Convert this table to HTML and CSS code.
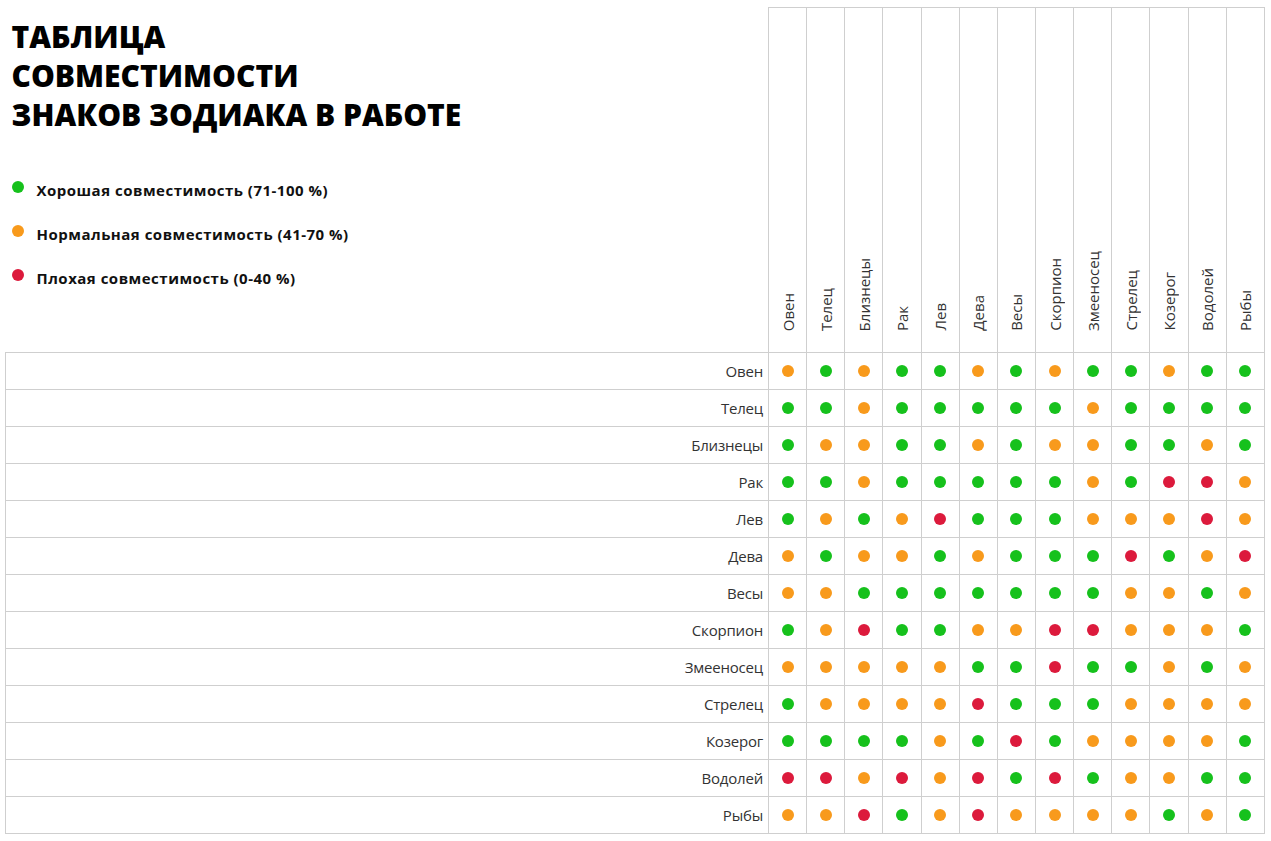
FILE: index.html
```html
<!DOCTYPE html>
<html lang="ru">
<head>
<meta charset="utf-8">
<title>Таблица совместимости знаков зодиака в работе</title>
<link rel="stylesheet" href="styles.css">
</head>
<body>
<table class="chart">
  <colgroup>
    <col class="col-label">
    <col span="13">
  </colgroup>
  <thead>
    <tr class="head-row">
      <th class="intro">
        <h1 class="title">ТАБЛИЦА<br>СОВМЕСТИМОСТИ<br>ЗНАКОВ ЗОДИАКА В РАБОТЕ</h1>
        <ul class="legend">
          <li><i class="dot g"></i>Хорошая совместимость (71-100 %)</li>
          <li><i class="dot o"></i>Нормальная совместимость (41-70 %)</li>
          <li><i class="dot r"></i>Плохая совместимость (0-40 %)</li>
        </ul>
      </th>
      <th class="sign"><span>Овен</span></th>
      <th class="sign"><span>Телец</span></th>
      <th class="sign"><span>Близнецы</span></th>
      <th class="sign"><span>Рак</span></th>
      <th class="sign"><span>Лев</span></th>
      <th class="sign"><span>Дева</span></th>
      <th class="sign"><span>Весы</span></th>
      <th class="sign"><span>Скорпион</span></th>
      <th class="sign"><span>Змееносец</span></th>
      <th class="sign"><span>Стрелец</span></th>
      <th class="sign"><span>Козерог</span></th>
      <th class="sign"><span>Водолей</span></th>
      <th class="sign"><span>Рыбы</span></th>
    </tr>
  </thead>
  <tbody>
    <tr><th class="name">Овен</th><td><i class="dot o"></i></td><td><i class="dot g"></i></td><td><i class="dot o"></i></td><td><i class="dot g"></i></td><td><i class="dot g"></i></td><td><i class="dot o"></i></td><td><i class="dot g"></i></td><td><i class="dot o"></i></td><td><i class="dot g"></i></td><td><i class="dot g"></i></td><td><i class="dot o"></i></td><td><i class="dot g"></i></td><td><i class="dot g"></i></td></tr>
    <tr><th class="name">Телец</th><td><i class="dot g"></i></td><td><i class="dot g"></i></td><td><i class="dot o"></i></td><td><i class="dot g"></i></td><td><i class="dot g"></i></td><td><i class="dot g"></i></td><td><i class="dot g"></i></td><td><i class="dot g"></i></td><td><i class="dot o"></i></td><td><i class="dot g"></i></td><td><i class="dot g"></i></td><td><i class="dot g"></i></td><td><i class="dot g"></i></td></tr>
    <tr><th class="name">Близнецы</th><td><i class="dot g"></i></td><td><i class="dot o"></i></td><td><i class="dot o"></i></td><td><i class="dot g"></i></td><td><i class="dot g"></i></td><td><i class="dot o"></i></td><td><i class="dot g"></i></td><td><i class="dot o"></i></td><td><i class="dot o"></i></td><td><i class="dot g"></i></td><td><i class="dot g"></i></td><td><i class="dot o"></i></td><td><i class="dot g"></i></td></tr>
    <tr><th class="name">Рак</th><td><i class="dot g"></i></td><td><i class="dot g"></i></td><td><i class="dot o"></i></td><td><i class="dot g"></i></td><td><i class="dot g"></i></td><td><i class="dot g"></i></td><td><i class="dot g"></i></td><td><i class="dot g"></i></td><td><i class="dot o"></i></td><td><i class="dot g"></i></td><td><i class="dot r"></i></td><td><i class="dot r"></i></td><td><i class="dot o"></i></td></tr>
    <tr><th class="name">Лев</th><td><i class="dot g"></i></td><td><i class="dot o"></i></td><td><i class="dot g"></i></td><td><i class="dot o"></i></td><td><i class="dot r"></i></td><td><i class="dot g"></i></td><td><i class="dot g"></i></td><td><i class="dot g"></i></td><td><i class="dot o"></i></td><td><i class="dot o"></i></td><td><i class="dot o"></i></td><td><i class="dot r"></i></td><td><i class="dot o"></i></td></tr>
    <tr><th class="name">Дева</th><td><i class="dot o"></i></td><td><i class="dot g"></i></td><td><i class="dot o"></i></td><td><i class="dot o"></i></td><td><i class="dot g"></i></td><td><i class="dot o"></i></td><td><i class="dot g"></i></td><td><i class="dot g"></i></td><td><i class="dot g"></i></td><td><i class="dot r"></i></td><td><i class="dot g"></i></td><td><i class="dot o"></i></td><td><i class="dot r"></i></td></tr>
    <tr><th class="name">Весы</th><td><i class="dot o"></i></td><td><i class="dot o"></i></td><td><i class="dot g"></i></td><td><i class="dot g"></i></td><td><i class="dot g"></i></td><td><i class="dot g"></i></td><td><i class="dot g"></i></td><td><i class="dot g"></i></td><td><i class="dot g"></i></td><td><i class="dot o"></i></td><td><i class="dot o"></i></td><td><i class="dot g"></i></td><td><i class="dot o"></i></td></tr>
    <tr><th class="name">Скорпион</th><td><i class="dot g"></i></td><td><i class="dot o"></i></td><td><i class="dot r"></i></td><td><i class="dot g"></i></td><td><i class="dot g"></i></td><td><i class="dot o"></i></td><td><i class="dot o"></i></td><td><i class="dot r"></i></td><td><i class="dot r"></i></td><td><i class="dot o"></i></td><td><i class="dot o"></i></td><td><i class="dot o"></i></td><td><i class="dot g"></i></td></tr>
    <tr><th class="name">Змееносец</th><td><i class="dot o"></i></td><td><i class="dot o"></i></td><td><i class="dot o"></i></td><td><i class="dot o"></i></td><td><i class="dot o"></i></td><td><i class="dot g"></i></td><td><i class="dot g"></i></td><td><i class="dot r"></i></td><td><i class="dot g"></i></td><td><i class="dot g"></i></td><td><i class="dot o"></i></td><td><i class="dot g"></i></td><td><i class="dot o"></i></td></tr>
    <tr><th class="name">Стрелец</th><td><i class="dot g"></i></td><td><i class="dot o"></i></td><td><i class="dot o"></i></td><td><i class="dot o"></i></td><td><i class="dot o"></i></td><td><i class="dot r"></i></td><td><i class="dot g"></i></td><td><i class="dot g"></i></td><td><i class="dot g"></i></td><td><i class="dot o"></i></td><td><i class="dot o"></i></td><td><i class="dot o"></i></td><td><i class="dot o"></i></td></tr>
    <tr><th class="name">Козерог</th><td><i class="dot g"></i></td><td><i class="dot g"></i></td><td><i class="dot g"></i></td><td><i class="dot g"></i></td><td><i class="dot o"></i></td><td><i class="dot g"></i></td><td><i class="dot r"></i></td><td><i class="dot g"></i></td><td><i class="dot o"></i></td><td><i class="dot o"></i></td><td><i class="dot o"></i></td><td><i class="dot o"></i></td><td><i class="dot g"></i></td></tr>
    <tr><th class="name">Водолей</th><td><i class="dot r"></i></td><td><i class="dot r"></i></td><td><i class="dot o"></i></td><td><i class="dot r"></i></td><td><i class="dot o"></i></td><td><i class="dot r"></i></td><td><i class="dot g"></i></td><td><i class="dot r"></i></td><td><i class="dot g"></i></td><td><i class="dot o"></i></td><td><i class="dot o"></i></td><td><i class="dot g"></i></td><td><i class="dot g"></i></td></tr>
    <tr><th class="name">Рыбы</th><td><i class="dot o"></i></td><td><i class="dot o"></i></td><td><i class="dot r"></i></td><td><i class="dot g"></i></td><td><i class="dot o"></i></td><td><i class="dot r"></i></td><td><i class="dot o"></i></td><td><i class="dot o"></i></td><td><i class="dot o"></i></td><td><i class="dot o"></i></td><td><i class="dot g"></i></td><td><i class="dot o"></i></td><td><i class="dot g"></i></td></tr>
  </tbody>
</table>
</body>
</html>
```

FILE: styles.css
```css
html, body {
  margin: 0;
  padding: 0;
  background: #fff;
}

body {
  font-family: "Open Sans", "Noto Sans", sans-serif;
  color: #333;
}

.chart {
  border-collapse: collapse;
  table-layout: fixed;
  width: 1260px;
  margin: 7px 0 0 5px;
}

.col-label {
  width: 763px;
}

.head-row {
  height: 345px;
}

.intro {
  border: none;
  padding: 9px 0 0 6px;
  text-align: left;
  vertical-align: top;
}

.title {
  margin: 0;
  font-size: 30px;
  line-height: 39px;
  font-weight: 800;
  color: #000;
}

.legend {
  list-style: none;
  margin: 45px 0 0;
  padding: 0;
  display: flex;
  flex-direction: column;
  gap: 22px;
}

.legend li {
  display: flex;
  align-items: center;
  font-size: 15px;
  letter-spacing: 0.5px;
  line-height: 22px;
  font-weight: 700;
  color: #111;
}

.legend .dot {
  margin: -6px 13px 0 0;
}

.sign {
  border: 1px solid #cfcfcf;
  padding: 0 0 16px;
  vertical-align: bottom;
  font-weight: 400;
}

.sign span {
  display: inline-block;
  writing-mode: vertical-rl;
  transform: rotate(180deg);
  font-size: 15px;
  line-height: 20px;
  color: #333;
}

.chart tbody tr {
  height: 37px;
}

.name {
  border: 1px solid #cfcfcf;
  padding: 0 5px 0 0;
  text-align: right;
  font-size: 15px;
  letter-spacing: -0.2px;
  font-weight: 400;
  color: #333;
  vertical-align: middle;
}

.chart td {
  border: 1px solid #cfcfcf;
  padding: 0;
  text-align: center;
  vertical-align: middle;
  line-height: 0;
}

.dot {
  display: inline-block;
  width: 12px;
  height: 12px;
  border-radius: 50%;
  flex: none;
}

.dot.g { background: #16c11c; }
.dot.o { background: #f89a1c; }
.dot.r { background: #dc1a3c; }
```
